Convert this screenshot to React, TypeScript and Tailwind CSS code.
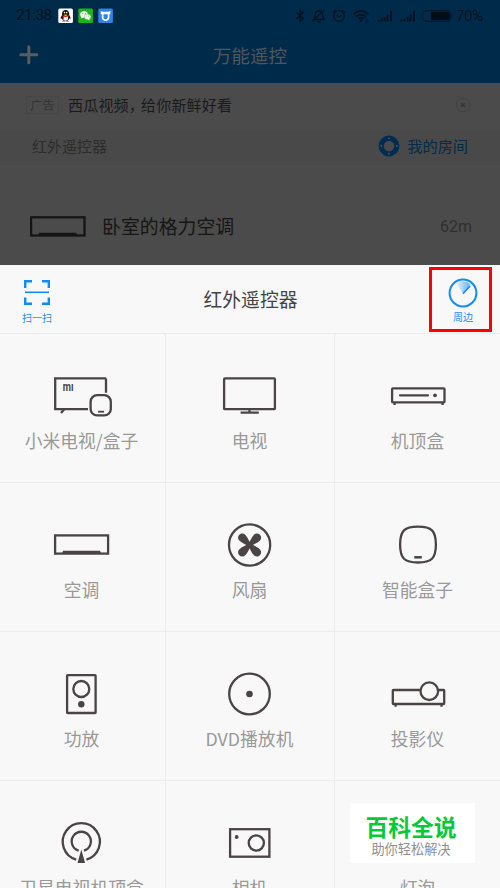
import type { ReactNode } from 'react';

interface Device {
  name: string;
  icon: ReactNode;
}

const devices: Device[] = [
  {
    name: '小米电视/盒子',
    icon: (
      <>
        <path d="M56.2 14.3H5.2v30.8H38M56 14.5v14.2" />
        <path d="M14 45.5l-3 3.5" />
        <rect x="40.6" y="31.2" width="20.2" height="20.2" rx="6.5" />
        <path d="M48 47.7h6" strokeWidth="1.8" />
        <text x="12.8" y="27.2" fontSize="12.5" fontWeight="700" fontFamily="Roboto, sans-serif" fill="#4a4445" stroke="none" textLength="10.8" lengthAdjust="spacingAndGlyphs">mı</text>
      </>
    ),
  },
  {
    name: '电视',
    icon: (
      <>
        <rect x="6.1" y="14.4" width="50.8" height="30.8" rx="0.8" />
        <path d="M31.5 45v3M22.6 48.7h18.2" />
      </>
    ),
  },
  {
    name: '机顶盒',
    icon: (
      <>
        <rect x="6.1" y="24.4" width="52.4" height="14" rx="0.8" />
        <path d="M14 31.3h28" strokeLinecap="round" />
        <path d="M8.6 38v3M56.6 38v3" />
        <circle cx="49" cy="31.3" r="1.9" fill="#4a4445" stroke="none" />
      </>
    ),
  },
  {
    name: '空调',
    icon: (
      <>
        <rect x="5.1" y="22.4" width="53" height="18.2" />
        <path d="M12 40.5l1-2.8h37l1.2 2.8z" fill="#4a4445" stroke="none" />
      </>
    ),
  },
  {
    name: '风扇',
    icon: (
      <>
        <circle cx="31.6" cy="32" r="20.6" />
        <g fill="#4a4445" stroke="none">
          {[45, 135, 225, 315].map((deg) => (
            <path
              key={deg}
              transform={`rotate(${deg} 31.6 32)`}
              d="M29.6 32c0-3-2.2-6.5-2.2-10.4a4.2 4.2 0 0 1 8.4 0c0 3.9-2.2 7.4-2.2 10.4z"
            />
          ))}
        </g>
      </>
    ),
  },
  {
    name: '智能盒子',
    icon: (
      <>
        <path d="M32 13.7c13.5 0 17.9 4 17.9 17.9S45.5 49.5 32 49.5 14.1 45.5 14.1 31.6 18.5 13.7 32 13.7z" />
        <path d="M28.3 44.3h7.5" strokeWidth="2.5" />
      </>
    ),
  },
  {
    name: '功放',
    icon: (
      <>
        <rect x="17.1" y="13.2" width="28.5" height="37.8" rx="0.6" />
        <circle cx="31.3" cy="27" r="8" />
        <circle cx="31.3" cy="42.3" r="3.2" fill="#4a4445" stroke="none" />
      </>
    ),
  },
  {
    name: 'DVD播放机',
    icon: (
      <>
        <circle cx="31.5" cy="32" r="20.3" />
        <circle cx="31.5" cy="32" r="3.3" fill="#4a4445" stroke="none" />
      </>
    ),
  },
  {
    name: '投影仪',
    icon: (
      <>
        <rect x="6.8" y="28" width="51.4" height="14" rx="0.6" />
        <path d="M9.6 42v2.8M55.5 42v2.8" />
        <circle cx="43.3" cy="29.2" r="8.8" fill="#f8f8f8" />
      </>
    ),
  },
  {
    name: '卫星电视机顶盒',
    icon: (
      <>
        <path d="M26.2 48.6a18.6 18.6 0 1 1 10.2 0" />
        <path d="M28.7 39.6a9.6 9.6 0 1 1 5.2 0" />
        <path d="M31.3 38.5l3.8 13.5h-7.6z" fill="#4a4445" stroke="none" />
      </>
    ),
  },
  {
    name: '相机',
    icon: (
      <>
        <rect x="12.1" y="18.2" width="39.3" height="27.5" />
        <circle cx="38.3" cy="32" r="7.6" />
        <circle cx="18.7" cy="26" r="1.9" fill="#4a4445" stroke="none" />
      </>
    ),
  },
  { name: '灯泡', icon: null },
];

// wrapper padding keeps the icons on whole pixels in each column
const columnClasses = ['border-r pr-px', 'border-r', 'pl-px'];

function StatusBar() {
  return (
    <div className="flex h-[30px] items-center pr-[15px] pl-[16px] text-[#001322]">
      <span className="mt-[2px] w-[42px] font-[Roboto] text-[15.5px] leading-none tracking-[-0.6px]">21:38</span>
      <svg className="mt-px" width="56" height="16" viewBox="0 0 56 16">
        <rect x="0.3" y="0.5" width="14.6" height="14.6" rx="1.5" fill="#fff" />
        <path d="M4 10C2.5 12.4 2.8 10.5 2.7 9.6c.3-1.2 1-1.7 1.3-2.7C3.8 3.6 5.2 2 7.6 2s3.8 1.6 3.6 4.9c.3 1 1 1.5 1.3 2.7-.1.9.2 2.8-1.3.4 0 1.6-1.4 3.3-3.6 3.3S4 11.600 4 10z" fill="#111" />
        <ellipse cx="7.6" cy="10" rx="2.5" ry="2.7" fill="#fff" />
        <path d="M4 7.1c2 1.2 5.2 1.2 7.2 0l.2 1c-2 1.200-4.200 1.100-5.300.9v1.700H4.800V8.600z" fill="#e22b2b" />
        <circle cx="6.5" cy="4.6" r="0.8" fill="#fff" />
        <circle cx="8.7" cy="4.6" r="0.8" fill="#fff" />
        <path d="M5.5 6.4h4.2L7.6 7.4zM4 13h3v1H4zM8.2 13h3v1h-3z" fill="#f5a400" />
        <rect x="20.3" y="0.5" width="14.6" height="14.6" rx="1.5" fill="#1db51d" />
        <ellipse cx="26" cy="6.5" rx="3.8" ry="3.2" fill="#fff" />
        <path d="M23.5 8.5l-.5 2 2-1z" fill="#fff" />
        <ellipse cx="29.5" cy="8.8" rx="3.4" ry="2.8" fill="#fff" stroke="#1db51d" strokeWidth="0.5" />
        <path d="M31 11l1 1.4-2.4-.8z" fill="#fff" />
        <g fill="#1db51d">
          <circle cx="24.8" cy="5.6" r="0.5" />
          <circle cx="27.3" cy="5.6" r="0.5" />
          <circle cx="28.4" cy="8.2" r="0.4" />
          <circle cx="30.5" cy="8.2" r="0.4" />
        </g>
        <rect x="40.3" y="0.5" width="14.6" height="14.6" rx="1.5" fill="#2f84e6" />
        <path d="M42.8 3l2 .8h5.600l2-.8v2.700l-1 .7v3.200c0 2-1.700 3.400-3.800 3.400s-3.800-1.400-3.800-3.400V6.400l-1-.7z" fill="#fff" />
        <path d="M45.5 6.300h4.200v3a2.100 2.100 0 0 1-4.200 0z" fill="#2f84e6" />
      </svg>
      <svg className="mt-px ml-auto" width="158" height="16" viewBox="0 0 158 16" fill="none" stroke="#001322" strokeWidth="1.3">
        <path d="M1.5 4.5l6.5 6-3 3V2l3 3-6.5 6" />
        <path d="M18.5 11.5c1.5-1.5 1.5-3 1.6-5 .2-2 1.7-3.5 3.7-3.5s3.7 1.5 3.8 3.5c.1 2 .2 3.5 1.6 5zM22 13.7h3.5M17.5 13.5L29.500 1.500" />
        <circle cx="44" cy="8" r="5.3" />
        <path d="M38 4.500l3-2.800M50 4.500l-3-2.800M41.700 7l2.300 2 2.700-2" />
        <path d="M58.500 6.200c4.400-4 10.600-4 15 0M61 8.700c3-2.600 7-2.600 10 0M63.500 11c1.500-1.300 3.500-1.300 5 0" strokeWidth="1.7" />
        <circle cx="66" cy="12.7" r="1.2" fill="#001322" stroke="none" />
        <circle cx="72" cy="13.3" r="1.4" strokeWidth="0.8" />
        <g strokeWidth="2">
          <path d="M83.5 13.5v-1.5M86.5 13.5v-3M89.5 13.5V9M92.5 13.5V6.5M96 13.5V3" />
          <path d="M106.5 13.5v-1.5M109.5 13.5v-3M112.5 13.5V9M115.5 13.5V6.5M119 13.5V3" />
        </g>
        <rect x="126.7" y="2.7" width="29.6" height="10.6" rx="5.3" strokeWidth="1" />
        <path d="M136 4h15a4 4 0 0 1 0 8h-15z" fill="#000c16" stroke="none" />
      </svg>
      <span className="mt-[2px] ml-[3px] w-[29px] font-[Roboto] text-[15px] leading-none tracking-[-0.4px]">70%</span>
    </div>
  );
}

function DimmedPage() {
  return (
    <div className="h-[265px] bg-[#4b4b4b]">
      <header className="h-[83px] bg-[#002a4a]">
        <StatusBar />
        <div className="flex h-[50px] items-center pl-[19px]">
          <svg width="20" height="20" viewBox="0 0 20 20" stroke="#5a5d60" strokeWidth="3" strokeLinecap="round">
            <path d="M1.8 9.7h16M9.8 1.7v16" />
          </svg>
          <h1 className="flex-1 pr-[39px] text-center text-[18.5px] leading-none text-[#50565c]">万能遥控</h1>
        </div>
      </header>
      <div className="flex h-[47px] items-center pr-[29px] pb-[4px] pl-[26px]">
        <span className="flex h-[18px] w-[33px] items-center justify-center border border-[#464646] text-[12px] leading-none text-[#343434]">广告</span>
        <span className="ml-[9px] text-[15px] leading-none tracking-[0.2px] text-[#191919]">
          西瓜视频<span className="-mr-[3px]">，</span>给你新鲜好看
        </span>
        <svg className="ml-auto" width="16" height="16" viewBox="0 0 16 16" fill="none" stroke="#414141">
          <circle cx="8" cy="8" r="6.7" />
          <path d="M6.2 6.2l3.6 3.6M9.8 6.2L6.2 9.8" strokeWidth="1.6" stroke="#353535" />
        </svg>
      </div>
      <div className="flex h-[36px] items-center border-b border-[#4d4d4d] bg-[#494949] pr-[32px] pb-[4px] pl-[32px]">
        <span className="text-[15px] leading-none text-[#2c2c2c]">红外遥控器</span>
        <svg className="ml-auto" width="22" height="22" viewBox="0 0 22 22">
          <circle cx="11" cy="11" r="7.8" fill="none" stroke="#012c50" strokeWidth="5.2" />
          <g fill="#4b5b6a">
            <circle cx="11" cy="3.3" r="0.9" />
            <circle cx="11" cy="18.7" r="0.9" />
            <circle cx="3.3" cy="11" r="0.9" />
            <circle cx="18.7" cy="11" r="0.9" />
          </g>
        </svg>
        <span className="ml-[7px] text-[15.2px] leading-none text-[#022b4c]">我的房间</span>
      </div>
      <div className="flex h-[99px] items-center pt-[22px] pr-[28px] pl-[30px]">
        <svg width="56" height="22" viewBox="0 0 56 22">
          <rect x="1.1" y="1.3" width="53.4" height="18.2" fill="none" stroke="#151515" strokeWidth="2.3" />
          <path d="M8 19.5l1-2.8h37l1.2 2.8z" fill="#151515" />
        </svg>
        <span className="ml-[16px] text-[18.9px] leading-none text-[#151515]">卧室的格力空调</span>
        <span className="ml-auto font-[Roboto] text-[16px] leading-none text-[#303030]">62m</span>
      </div>
    </div>
  );
}

function SheetHeader() {
  return (
    <div className="flex h-[69px] justify-between border-b border-[#ececec] pr-[8px] text-[#1e90f5]">
      <div className="flex w-[74px] flex-col items-center pt-[14px]">
        <svg width="28" height="28" viewBox="0 0 28 28" fill="none" stroke="#0f8cfb" strokeWidth="2.4">
          <path d="M2.2 9V2.2H9M19 2.2h6.8V9M2.2 18.5v6.3H9M19 24.8h6.8v-6.300" />
          <path d="M2 13.3h24" strokeWidth="1.6" />
        </svg>
        <span className="mt-[5px] text-[10px] leading-[12px]">扫一扫</span>
      </div>
      <h2 className="self-center pr-[2px] text-[18.8px] leading-none text-[#444]">红外遥控器</h2>
      <div className="mt-[2px] flex h-[65px] w-[63px] flex-col items-center border-[3.5px] border-[#fe0000] pt-[8px] pl-[5px]">
        <svg width="30" height="30" viewBox="0 0 30 30" fill="none" stroke="#0f8cfb">
          <defs>
            <linearGradient id="sweep" x1="0" y1="0" x2="1" y2="0">
              <stop offset="0" stopColor="#0f8cfb" stopOpacity="0.05" />
              <stop offset="1" stopColor="#0f8cfb" stopOpacity="0.65" />
            </linearGradient>
          </defs>
          <path d="M15 15L8 5.500a12 12 0 0 1 14.500 0.500z" fill="url(#sweep)" stroke="none" />
          <circle cx="15" cy="15" r="13.4" strokeWidth="2" />
          <path d="M15.5 15l6-6.500" strokeWidth="1.8" strokeLinecap="round" />
        </svg>
        <span className="mt-[3px] text-[10px] leading-[12px]">周边</span>
      </div>
    </div>
  );
}

export default function App() {
  return (
    <div className="relative h-[888px] w-[500px] overflow-hidden bg-[#f8f8f8] font-['Noto_Sans_CJK_SC',sans-serif]">
      <DimmedPage />
      <SheetHeader />
      <div className="grid grid-cols-[166px_169px_165px]">
        {devices.map((device, i) => (
          <div
            key={device.name}
            className={`flex h-[149px] flex-col items-center border-b border-[#ececec] pt-[30px] ${columnClasses[i % 3]}`}
          >
            <svg className="shrink-0" width="64" height="64" viewBox="0 0 64 64" fill="none" stroke="#4a4445" strokeWidth="2.3">
              {device.icon}
            </svg>
            <span className="pr-px text-[17.8px] leading-[25px] whitespace-nowrap text-[#999]">{device.name}</span>
          </div>
        ))}
      </div>
      <div className="absolute top-[803px] left-[350px] flex h-[60px] w-[125px] flex-col items-center bg-white pt-[11px] pr-[3px]">
        <span className="text-[22.8px] leading-[26px] font-bold text-[#06c93a]">百科全说</span>
        <span className="text-[13.2px] leading-[17px] text-[#8f8f8f]">助你轻松解决</span>
      </div>
    </div>
  );
}
